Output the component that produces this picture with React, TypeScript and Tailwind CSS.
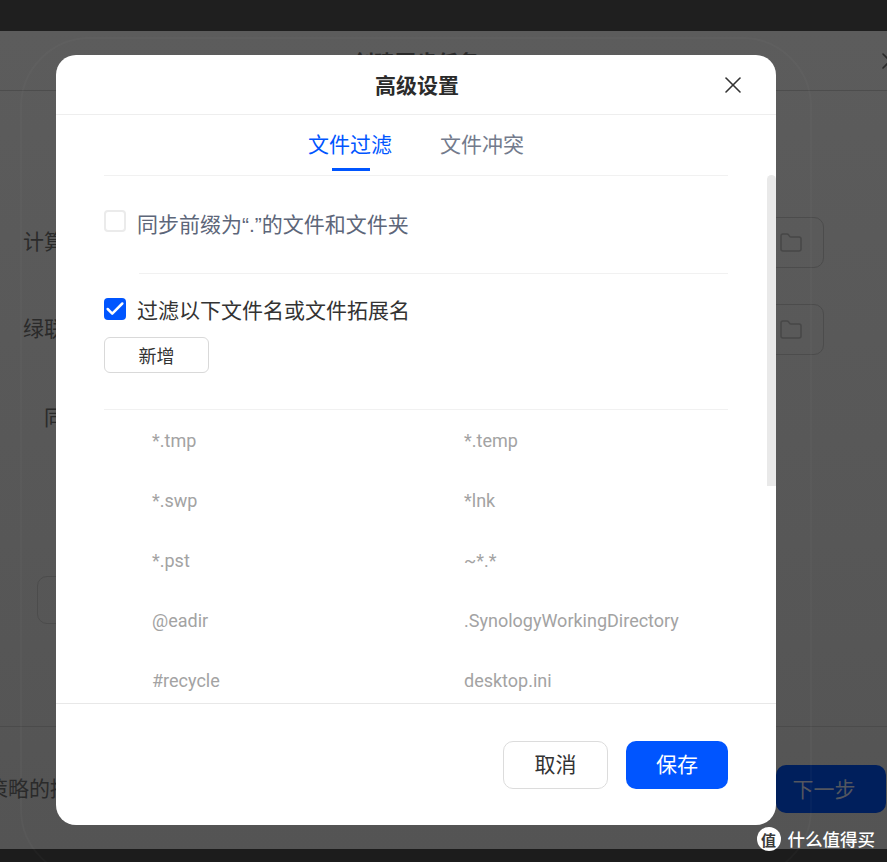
import { Check, Folder, X } from 'lucide-react';

const CJK = '"Noto Sans CJK SC", "Liberation Sans", sans-serif';

const FILTER_ROWS = [
  ['*.tmp', '*.temp'],
  ['*.swp', '*lnk'],
  ['*.pst', '~*.*'],
  ['@eadir', '.SynologyWorkingDirectory'],
  ['#recycle', 'desktop.ini'],
];

function BackdropRow({ label }: { label: string }) {
  return (
    <div className="flex h-[51px] items-center justify-between pr-[63px]">
      <span className="pb-[4px] pl-[23px] text-[21px] text-[#2a2a2a]">{label}</span>
      <div className="flex h-[51px] w-[100px] items-center justify-end rounded-[10px] border border-[#4c4c4c] pr-[20px]">
        <Folder className="size-[24px] text-[#474747]" strokeWidth={1.5} />
      </div>
    </div>
  );
}

function Backdrop() {
  return (
    <div className="flex h-[818px] flex-col bg-gradient-to-b from-[#5c5c5c] to-[#545454]">
      <div className="flex h-[60px] shrink-0 items-center justify-center border-b border-[#4d4d4d] pr-[55px] pt-[3px] text-[21px] font-bold text-[#2a2a2a]">
        创建同步任务
      </div>
      <div className="flex h-[636px] shrink-0 flex-col border-b border-[#4b4b4b] pt-[126px]">
        <BackdropRow label="计算机文件夹" />
        <div className="h-[36px]" />
        <BackdropRow label="绿联云文件夹" />
        <div className="flex h-[77px] items-end pl-[44px] text-[21px] text-[#2a2a2a]">同步方向</div>
        <div className="ml-[37px] mt-[144px] h-[48px] w-[100px] rounded-[10px] border border-[#4c4c4c]" />
      </div>
      <div className="flex flex-1 items-center justify-between pt-[2px] text-[21px] text-[#2a2a2a]">
        <span className="-ml-[13px] pb-[2px]">策略的描述</span>
        <div className="mr-px flex h-[48px] w-[110px] items-center justify-center rounded-[10px] bg-[#001f5c] pr-[14px] text-[#53565f]">
          下一步
        </div>
      </div>
    </div>
  );
}

function Dialog() {
  return (
    <div className="absolute left-[56px] top-[24px] flex h-[770px] w-[720px] flex-col overflow-hidden rounded-[20px] bg-white">
      <div className="relative flex h-[60px] shrink-0 items-center justify-center border-b border-[#eeeeee] pl-[2px]">
        <span className="text-[21px] font-bold text-[#2b2b2b]">高级设置</span>
        <X className="absolute right-[29px] top-[16px] size-[28px] text-[#333333]" strokeWidth={1.4} />
      </div>

      <div className="relative min-h-0 flex-1 overflow-hidden">
        <div className="mx-[48px]">
          <div className="flex h-[61px] items-start justify-center gap-[48px] border-b border-[#f1f1f1] pt-[12px] text-[21px] leading-[32px]">
            <div className="relative text-[#0055ff]">
              文件过滤
              <div className="absolute left-[24px] top-[41px] h-[3px] w-[38px] bg-[#0055ff]" />
            </div>
            <div className="text-[#737b8c]">文件冲突</div>
          </div>

          <div className="flex h-[97px] items-start gap-[11px] pt-[34px]">
            <div className="size-[22px] rounded-[4px] border-2 border-[#ebebeb]" />
            <span className="-mt-[1px] text-[21px] leading-[28px] text-[#5d6679]">
              同步前缀为<span style={{ fontFamily: '"Liberation Sans", sans-serif' }}>“.”</span>的文件和文件夹
            </span>
          </div>
          <div className="ml-[35px] border-t border-[#f1f1f1]" />

          <div className="flex items-start gap-[11px] pt-[24px]">
            <div className="flex size-[22px] items-center justify-center rounded-[4px] bg-[#0055ff]">
              <Check className="size-[22px] text-white" strokeWidth={2.7} />
            </div>
            <span className="text-[21px] leading-[22px] text-[#333333]">过滤以下文件名或文件拓展名</span>
          </div>
          <button className="mt-[17px] flex h-[36px] w-[105px] items-center justify-center rounded-[6px] border border-[#d9d9d9] text-[18px] text-[#333333]">
            新增
          </button>

          <div className="mt-[36px] border-t border-[#f1f1f1]" />
          <div style={{ fontFamily: 'Roboto, sans-serif' }} className="text-[18px] text-[#a3a3a3]">
            {FILTER_ROWS.map(([a, b]) => (
              <div key={a} className="flex h-[60px] items-center">
                <span className="w-[312px] pl-[48px]">{a}</span>
                <span className="pl-[48px]">{b}</span>
              </div>
            ))}
          </div>
        </div>
        <div className="absolute right-0 top-[60px] h-[311px] w-[9px] rounded-t-[5px] bg-[#e9e9e9]" />
      </div>

      <div className="flex h-[122px] shrink-0 items-start justify-end gap-[18px] border-t border-[#e8e8e8] pr-[48px] pt-[37px] text-[21px]">
        <button className="h-[48px] w-[105px] rounded-[10px] border border-[#dcdcdc] pb-[2px] text-[#333333]">取消</button>
        <button className="h-[48px] w-[102px] rounded-[10px] bg-[#0055ff] pb-[2px] text-white">保存</button>
      </div>
    </div>
  );
}

export default function App() {
  return (
    <div style={{ fontFamily: CJK }} className="flex h-[862px] w-[887px] flex-col overflow-hidden bg-[#1c1c1c]">
      <div className="h-[31px] shrink-0 bg-[#1f1f1f]" />
      <div className="relative h-[818px] shrink-0">
        <Backdrop />
        <div className="absolute bottom-[-30px] left-[20px] top-[6px] w-[792px] rounded-[70px] border-2 border-white/[0.025]" />
        <X className="absolute right-[-17px] top-[16px] size-[28px] text-[#2a2a2a]" strokeWidth={1.4} />
        <Dialog />
        <div className="absolute bottom-[-2px] right-[12px] flex items-center gap-[7px]">
          <div className="flex size-[24px] items-center justify-center rounded-full bg-white text-[15px] font-bold leading-none text-[#3a3a3a]">
            值
          </div>
          <span className="text-[17.5px] font-medium leading-[24px] text-white">什么值得买</span>
        </div>
      </div>
      <div className="h-[13px] shrink-0 bg-[#1c1c1c]" />
    </div>
  );
}
